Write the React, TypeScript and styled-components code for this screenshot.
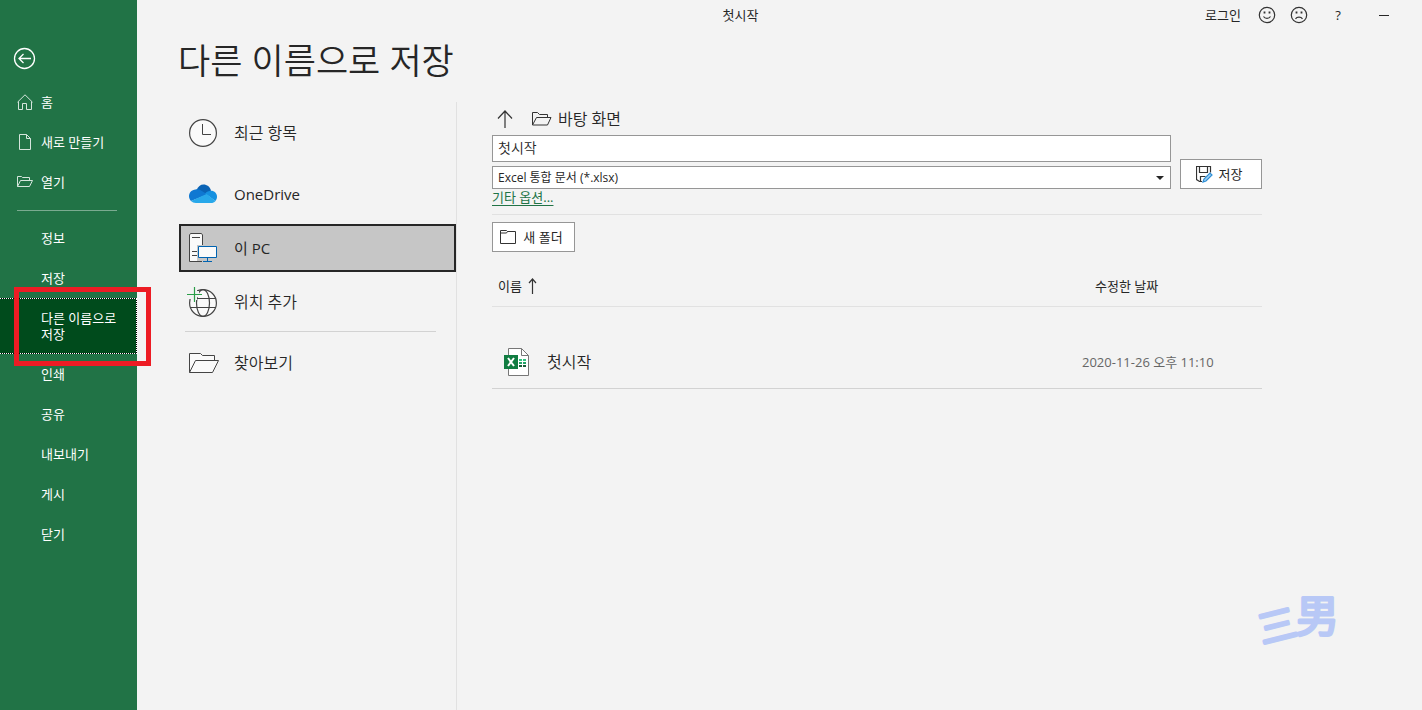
import React from "react";
import styled, { createGlobalStyle } from "styled-components";

const GlobalStyle = createGlobalStyle`
  *, *::before, *::after { box-sizing: border-box; }
  body {
    margin: 0;
    background: #f3f3f3;
    color: #262626;
    font-family: "Open Sans", "Noto Sans CJK KR", sans-serif;
    font-size: 13px;
    line-height: 16px;
  }
  button, input, select { font: inherit; color: inherit; margin: 0; border-radius: 0; }
  h1 { margin: 0; }
`;

const Page = styled.div`
  position: relative;
  display: flex;
  min-height: 100vh;
`;

/* ---------- sidebar ---------- */

const Sidebar = styled.nav`
  flex: 0 0 137px;
  display: flex;
  flex-direction: column;
  padding-top: 34px;
  background: #217346;
  color: #fff;
`;

const BackButton = styled.button`
  display: flex;
  align-items: center;
  height: 48px;
  padding: 0 0 0 13px;
  border: 0;
  background: none;
`;

const NavItem = styled.button<{ $selected?: boolean }>`
  position: relative;
  display: flex;
  align-items: center;
  width: 100%;
  height: ${(p) => (p.$selected ? "56px" : "40px")};
  padding: 0 16px 0 41px;
  border: 0 dotted #fff;
  border-width: ${(p) => (p.$selected ? "1px 1px 1px 0" : "0")};
  background: ${(p) =>
    p.$selected
      ? "linear-gradient(#004b1c, #004b1c) padding-box, linear-gradient(#000, #000) border-box"
      : "none"};
  text-align: left;
  word-break: keep-all;
`;

const NavItemWithIcon = styled(NavItem)`
  gap: 8px;
  padding-left: 17px;
`;

const NavDivider = styled.hr`
  width: 100px;
  margin: 8px 0 7px 17px;
  border: 0;
  border-top: 1px solid #7aab90;
`;

const Highlight = styled.span`
  position: absolute;
  top: -12px;
  right: -15px;
  bottom: -13px;
  left: 14px;
  z-index: 2;
  border: 5px solid #ed1c24;
  pointer-events: none;
`;

/* ---------- main area ---------- */

const Main = styled.main`
  flex: 1;
  min-width: 0;
  display: flex;
  flex-direction: column;
`;

const TopBar = styled.header`
  display: flex;
  align-items: center;
  height: 30px;
  padding-right: 22px;
`;

const DocumentTitle = styled.span`
  flex: 1;
  padding-left: 142px;
  text-align: center;
`;

const TopActions = styled.div`
  display: flex;
  align-items: center;
  gap: 14px;
`;

const PlainButton = styled.button<{ $width?: number }>`
  display: flex;
  align-items: center;
  justify-content: center;
  width: ${(p) => (p.$width ? `${p.$width}px` : "auto")};
  height: 24px;
  padding: 0;
  border: 0;
  background: none;
`;

const Title = styled.h1`
  padding: 1px 0 11px 41px;
  font-size: 35px;
  font-weight: 350;
  line-height: 60px;
`;

const Columns = styled.div`
  flex: 1;
  display: flex;
`;

const Places = styled.div`
  flex: 0 0 320px;
  display: flex;
  flex-direction: column;
  padding-left: 42px;
  border-right: 1px solid #e1e1e1;
`;

const Place = styled.button<{ $tall?: boolean; $selected?: boolean; $latin?: boolean }>`
  display: flex;
  align-items: center;
  gap: 17px;
  width: 100%;
  height: ${(p) => (p.$tall ? "61px" : "48px")};
  padding: ${(p) => (p.$tall ? "1px 8px 0" : "0 8px")};
  border: 2px solid ${(p) => (p.$selected ? "#262626" : "transparent")};
  background: ${(p) => (p.$selected ? "#c6c6c6" : "none")};
  font-size: ${(p) => (p.$latin ? "15px" : "16px")};
  font-weight: ${(p) => (p.$latin ? "400" : "350")};
  line-height: 24px;
`;

const PlaceIcon = styled.span`
  flex: 0 0 28px;
  display: flex;
  align-items: center;
`;

const PlacesDivider = styled.hr`
  width: 251px;
  margin: 5px 0 7px 6px;
  border: 0;
  border-top: 1px solid #d2d2d2;
`;

const PlaceAfterSelected = styled(Place)`
  margin-top: 6px;
`;

const Browser = styled.section`
  flex: 1;
  min-width: 0;
  padding: 0 160px 0 35px;
`;

const PathRow = styled.div`
  display: flex;
  align-items: center;
  gap: 19px;
  height: 33px;
  padding-left: 5px;
`;

const PathButton = styled(PlainButton)`
  gap: 6px;
  font-size: 16px;
  font-weight: 350;
  line-height: 24px;
`;

const SaveForm = styled.form`
  display: flex;
  align-items: flex-end;
  gap: 9px;
`;

const Fields = styled.div`
  flex: 1;
  display: flex;
  flex-direction: column;
  gap: 4px;
`;

const NameInput = styled.input`
  width: 100%;
  height: 27px;
  padding: 0 5px 3px;
  border: 1px solid #969696;
  background: #fff;
  font-size: 14px;
  font-weight: 350;
`;

const SelectBox = styled.div`
  display: grid;
  align-items: center;

  & > * { grid-area: 1 / 1; }
  & > svg { justify-self: end; margin-right: 7px; pointer-events: none; }
`;

const TypeSelect = styled.select`
  width: 100%;
  height: 23px;
  padding: 0 5px;
  border: 1px solid #969696;
  background: #fff;
  appearance: none;
  font-size: 12px;
`;

const BoxButton = styled.button<{ $width: number }>`
  display: flex;
  align-items: center;
  justify-content: center;
  gap: 6px;
  width: ${(p) => p.$width}px;
  height: 30px;
  padding: 0 4px 0 0;
  border: 1px solid #969696;
  background: #fff;
`;

const OptionsRow = styled.div`
  height: 26px;
  margin-bottom: 7px;
  border-bottom: 1px solid #e1e1e1;
`;

const OptionsLink = styled.a`
  color: #217346;
  text-decoration: underline;
  text-underline-offset: 3px;
`;

const FileTable = styled.table`
  width: 100%;
  margin-top: 14px;
  border-collapse: collapse;
  table-layout: fixed;
`;

const HeadCell = styled.th<{ $date?: boolean }>`
  width: ${(p) => (p.$date ? "180px" : "auto")};
  height: 40px;
  padding: 0 0 0 ${(p) => (p.$date ? "13px" : "6px")};
  border-bottom: 1px solid #e1e1e1;
  font-weight: 400;
  text-align: left;
`;

const Cell = styled.td<{ $date?: boolean }>`
  height: 82px;
  padding: 30px 0 0 ${(p) => (p.$date ? "0" : "12px")};
  border-bottom: 1px solid #d2d2d2;
  color: ${(p) => (p.$date ? "#666" : "#262626")};
  font-size: ${(p) => (p.$date ? "13px" : "16px")};
  font-weight: ${(p) => (p.$date ? "400" : "350")};
`;

const Inline = styled.span<{ $gap: number }>`
  display: flex;
  align-items: center;
  gap: ${(p) => p.$gap}px;
`;

const Signature = styled.svg`
  position: absolute;
  right: 72px;
  bottom: 50px;
  fill: #b8c8f6;
  stroke: #b8c8f6;
  stroke-width: 3px;
  stroke-linejoin: round;
  font-family: "Noto Sans CJK JP", sans-serif;
  font-weight: 350;
  pointer-events: none;
`;

/* ---------- icons ---------- */

const BackIcon = () => (
  <svg width="23" height="23" viewBox="0 0 23 23" fill="none" stroke="#fff" strokeWidth="1.300">
    <circle cx="11.500" cy="11.500" r="10" />
    <path d="M18 11.500H6M10.500 7l-4.500 4.500 4.500 4.500" />
  </svg>
);

const HomeIcon = () => (
  <svg width="16" height="16" viewBox="0 0 16 16" fill="none" stroke="#d5e5dc">
    <path d="M.5 8.200 8 .8l7.500 7.400M1.500 7.500v8h4v-6h4v6h5v-8" />
  </svg>
);

const NewIcon = () => (
  <svg width="16" height="16" viewBox="0 0 16 16" fill="none" stroke="#d5e5dc">
    <path d="M2.500 .5h7l4 4v11h-11zM9.500 .5v4h4" />
  </svg>
);

const OpenIcon = () => (
  <svg width="16" height="16" viewBox="0 0 16 16" fill="none" stroke="#d5e5dc">
    <path d="M.5 12.500v-10h4l1 1h7v3M.5 12.500l3-6h12l-3 6z" />
  </svg>
);

const ClockIcon = () => (
  <svg width="28" height="28" viewBox="0 0 28 28" fill="none" stroke="#444">
    <circle cx="14" cy="14" r="13.400" fill="#fafafa" strokeWidth="1.200" />
    <path d="M13.500 5v10.500h8.500" />
  </svg>
);

const CloudIcon = () => (
  <svg width="28" height="20" viewBox="0 0 28 20">
    <path d="M7.500 6C9 2.500 11.500 .5 14.500 .5c3.500 0 6.500 2.300 7.500 6L17 11z" fill="#0a63b5" />
    <path d="M6.500 5.500c2-.5 4 0 5.500 1l6.500 4L2 17C.8 15.800 0 14.200 0 12.300c0-3.600 2.800-6.600 6.500-6.800z" fill="#0f78d2" />
    <path d="M22 6.800c3.500 0 6 2.700 6 6 0 1.700-.6 3.100-1.600 4.200L16 9.500c1.800-1.700 3.600-2.700 6-2.700z" fill="#1590e0" />
    <path d="M2 17l15.500-7 9 7c-1.200 1.400-2.700 2-4.500 2H6.800C4.800 19 3.200 18.200 2 17z" fill="#28a8ea" />
  </svg>
);

const PcIcon = () => (
  <svg width="28" height="30" viewBox="0 0 28 30" fill="none">
    <path d="M13.500 28.500H.5V2l1-1.500h11l1 1.500v26.500" fill="#fafafa" stroke="#444" />
    <path d="M3 4.500h8M3 18.500h6M3 22.500h6" stroke="#444" />
    <path d="M8 12h20v17H8z" fill="#c6c6c6" />
    <path d="M8 28.500h5" stroke="#444" />
    <path d="M9.500 13.500h18v11h-18z" fill="#fafafa" stroke="#0063b1" />
    <path d="M18.500 25v3.500M14 28.500h9" stroke="#0063b1" />
  </svg>
);

const GlobeIcon = () => (
  <svg width="28" height="30" viewBox="2 0 28 30" fill="none" stroke="#444" strokeWidth="1.200" overflow="visible">
    <circle cx="16" cy="16" r="13.400" fill="#fafafa" />
    <ellipse cx="16" cy="16" rx="6.500" ry="13.400" />
    <path d="M4 11.500h24M3 20.500h26" />
    <path d="M0 0h10v4h2v6h-2v3H6l-3-1H0z" fill="#f3f3f3" stroke="none" />
    <path d="M7.500 0v15M0 7.500h15" stroke="#2a9d48" />
  </svg>
);

const BrowseIcon = () => (
  <svg width="28" height="22" viewBox="0 0 28 22" fill="#fafafa" stroke="#444" overflow="visible">
    <path d="M.5 20.500V1.500h11l2 2h12v5" />
    <path d="M.5 20.500l6-12h23l-6 12z" />
  </svg>
);

const ArrowUpIcon = ({ width, height }: { width: number; height: number }) => (
  <svg width={width} height={height} viewBox={`0 0 ${width} ${height}`} fill="none" stroke="#333" strokeWidth="1.200">
    <path
      d={`M${width / 2} ${height}V1M1 ${width / 2 + 0.5}L${width / 2} 1l${width / 2 - 1} ${width / 2 - 0.5}`}
    />
  </svg>
);

const FolderOpenIcon = () => (
  <svg width="20" height="14" viewBox="0 0 20 14" fill="none" stroke="#333">
    <path d="M.5 13V.5h5l2 2h8v3M.5 13l4-7.500h14.500L15.500 13z" />
  </svg>
);

const FolderIcon = () => (
  <svg width="17" height="14" viewBox="0 0 17 14" fill="none" stroke="#333">
    <path d="M.5 .5h6l1 1h8v12H.5zM.5 3h6l1-1.500" />
  </svg>
);

const SaveIcon = () => (
  <svg width="17" height="17" viewBox="0 0 17 17" fill="none">
    <path d="M6 15.500H3.500l-3-2V.5h14v6M3.500 .5v6h8v-6M4.500 15.500v-5h5" stroke="#333" strokeWidth="1.200" />
    <path d="M7 16l1-3 6-6 2 2-6 6z" fill="#9fd0f2" stroke="#2f8fd6" strokeWidth="1.200" />
  </svg>
);

const FaceIcon = ({ sad }: { sad?: boolean }) => (
  <svg width="18" height="18" viewBox="0 0 18 18" fill="none" stroke="#333" strokeWidth="1.200">
    <circle cx="9" cy="9" r="7.700" />
    <path d={sad ? "M5.500 12.800c1.500-2.200 5.500-2.200 7 0" : "M5.500 10.500c1.500 2.500 5.500 2.500 7 0"} />
    <path d="M6.500 5.500v2M11.500 5.500v2" strokeWidth="1.800" />
  </svg>
);

const MinimizeIcon = () => (
  <svg width="10" height="2" viewBox="0 0 10 2">
    <path d="M0 1.500h10" stroke="#262626" />
  </svg>
);

const CaretIcon = () => (
  <svg width="8" height="4" viewBox="0 0 8 4">
    <path d="M0 0h8L4 4z" fill="#262626" />
  </svg>
);

const ExcelIcon = () => (
  <svg width="26" height="28" viewBox="0 0 26 28" fill="none">
    <path d="M4.500 .5h13l7 7v20h-20z" fill="#fff" stroke="#777" />
    <path d="M17.500 .5v7h7" stroke="#777" />
    <path d="M15 11h3v2h-3zM19 11h3v2h-3z" fill="#33c481" />
    <path d="M15 14h3v2h-3zM19 14h3v2h-3z" fill="#21a366" />
    <path d="M15 17h3v2h-3zM19 17h3v2h-3z" fill="#185c37" />
    <path d="M0 7h14v14H0z" fill="#107c41" />
    <path d="M4 10l6 8M10 10l-6 8" stroke="#fff" strokeWidth="2" />
  </svg>
);

const lowerNav = ["인쇄", "공유", "내보내기", "게시", "닫기"];

export default function App() {
  return (
    <Page>
      <GlobalStyle />
      <Sidebar>
        <BackButton aria-label="뒤로"><BackIcon /></BackButton>
        <NavItemWithIcon><HomeIcon />홈</NavItemWithIcon>
        <NavItemWithIcon><NewIcon />새로 만들기</NavItemWithIcon>
        <NavItemWithIcon><OpenIcon />열기</NavItemWithIcon>
        <NavDivider />
        <NavItem>정보</NavItem>
        <NavItem>저장</NavItem>
        <NavItem $selected aria-current="page">
          다른 이름으로 저장
          <Highlight />
        </NavItem>
        {lowerNav.map((label) => (
          <NavItem key={label}>{label}</NavItem>
        ))}
      </Sidebar>

      <Main>
        <TopBar>
          <DocumentTitle>첫시작</DocumentTitle>
          <TopActions>
            <PlainButton $width={42}>로그인</PlainButton>
            <PlainButton $width={18} aria-label="웃는 얼굴"><FaceIcon /></PlainButton>
            <PlainButton $width={18} aria-label="찡그린 얼굴"><FaceIcon sad /></PlainButton>
            <PlainButton $width={32} aria-label="도움말">?</PlainButton>
            <PlainButton $width={32} aria-label="최소화"><MinimizeIcon /></PlainButton>
          </TopActions>
        </TopBar>
        <Title>다른 이름으로 저장</Title>
        <Columns>
          <Places>
            <Place $tall><PlaceIcon><ClockIcon /></PlaceIcon>최근 항목</Place>
            <Place $tall $latin><PlaceIcon><CloudIcon /></PlaceIcon>OneDrive</Place>
            <Place $selected $latin><PlaceIcon><PcIcon /></PlaceIcon>이 PC</Place>
            <PlaceAfterSelected><PlaceIcon><GlobeIcon /></PlaceIcon>위치 추가</PlaceAfterSelected>
            <PlacesDivider />
            <Place><PlaceIcon><BrowseIcon /></PlaceIcon>찾아보기</Place>
          </Places>

          <Browser>
            <PathRow>
              <PlainButton aria-label="위로"><ArrowUpIcon width={16} height={18} /></PlainButton>
              <PathButton><FolderOpenIcon />바탕 화면</PathButton>
            </PathRow>
            <SaveForm onSubmit={(e) => e.preventDefault()}>
              <Fields>
                <NameInput aria-label="파일 이름" defaultValue="첫시작" />
                <SelectBox>
                  <TypeSelect aria-label="파일 형식">
                    <option>Excel 통합 문서 (*.xlsx)</option>
                  </TypeSelect>
                  <CaretIcon />
                </SelectBox>
              </Fields>
              <BoxButton $width={82} type="submit"><SaveIcon />저장</BoxButton>
            </SaveForm>
            <OptionsRow><OptionsLink href="#options">기타 옵션...</OptionsLink></OptionsRow>
            <BoxButton $width={83}><FolderIcon />새 폴더</BoxButton>
            <FileTable>
              <thead>
                <tr>
                  <HeadCell><Inline $gap={6}>이름<ArrowUpIcon width={9} height={16} /></Inline></HeadCell>
                  <HeadCell $date>수정한 날짜</HeadCell>
                </tr>
              </thead>
              <tbody>
                <tr>
                  <Cell><Inline $gap={17}><ExcelIcon />첫시작</Inline></Cell>
                  <Cell $date>2020-11-26 오후 11:10</Cell>
                </tr>
              </tbody>
            </FileTable>
          </Browser>
        </Columns>
      </Main>
      <Signature width="110" height="100" viewBox="0 0 110 100" aria-hidden="true">
        <text x="22" y="84" fontSize="38" transform="rotate(-14 22 84)">三</text>
        <text x="56" y="72" fontSize="43">男</text>
      </Signature>
    </Page>
  );
}
